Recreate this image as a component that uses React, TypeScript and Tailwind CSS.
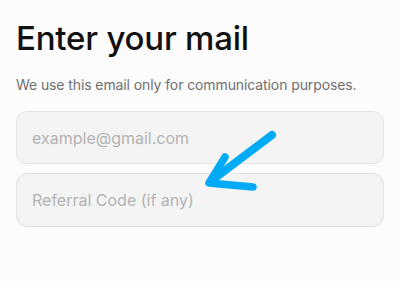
export default function App() {
  return (
    <div className="relative w-[400px] h-[281px] bg-[#fcfcfc] px-4 pt-[18px] font-['Inter',sans-serif]">
      <h1 className="text-[33px] leading-[40px] font-medium text-[#111] tracking-[-0.2px]">Enter your mail</h1>
      <p className="mt-[17px] text-[14px] leading-[20px] tracking-[-0.1px] text-[#707070]">
        We use this email only for communication purposes.
      </p>
      <div className="mt-[16px] flex flex-col gap-[9px]">
        <input
          placeholder="example@gmail.com"
          className="h-[53px] w-full rounded-[11px] border border-[#e4e4e4] bg-[#f4f4f4] px-[15px] text-[16px] text-[#333] placeholder:text-[#b3b3b3] outline-none"
        />
        <input
          placeholder="Referral Code (if any)"
          className="h-[54px] w-full rounded-[11px] border border-[#e4e4e4] bg-[#f4f4f4] px-[15px] text-[16px] text-[#333] placeholder:text-[#b3b3b3] outline-none"
        />
      </div>
      <svg className="absolute left-0 top-0 pointer-events-none" width="400" height="281" viewBox="0 0 400 281">
        <g fill="none" stroke="#00aaf5" strokeLinecap="round" strokeLinejoin="round">
          <path d="M272 135 L211 181" strokeWidth="8" />
          <path d="M225 157 L209 183 L253 187" strokeWidth="7.5" />
        </g>
      </svg>
    </div>
  );
}
